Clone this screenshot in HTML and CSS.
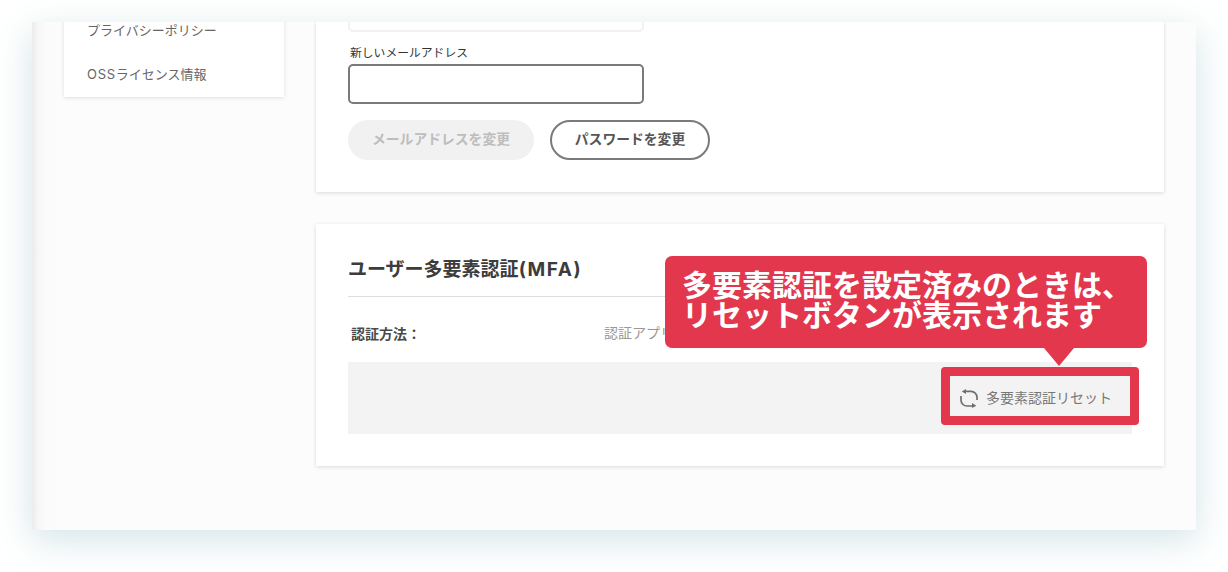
FILE: index.html
```html
<!DOCTYPE html>
<html lang="ja">
<head>
<meta charset="utf-8">
<title>ユーザー多要素認証</title>
<link rel="stylesheet" href="styles.css">
</head>
<body>
<div class="window">
  <div class="layout">
    <nav class="side">
      <a class="side-item">プライバシーポリシー</a>
      <a class="side-item"><span class="wide-sm">OSS</span>ライセンス情報</a>
    </nav>
    <main class="main">
      <section class="card card-mail">
        <div class="input input-old"></div>
        <label class="label">新しいメールアドレス</label>
        <div class="input"></div>
        <div class="btns">
          <button class="btn btn-off">メールアドレスを変更</button>
          <button class="btn btn-line">パスワードを変更</button>
        </div>
      </section>
      <section class="card card-mfa">
        <h2 class="title">ユーザー多要素認証<span class="wide-lg">(MFA)</span></h2>
        <div class="row">
          <span class="row-label">認証方法：</span>
          <span class="row-value">認証アプリ</span>
        </div>
        <div class="actions">
          <span class="reset">
            <svg class="reset-icon" viewBox="0 0 18 19" width="18" height="19" fill="none" stroke="#6f6f6f" stroke-width="1.7">
              <path d="M4 2.4H11A6 6 0 0 1 17 8.4V11"/>
              <path d="M1 7V11A6 6 0 0 0 7 17H14"/>
              <path d="M6 0 1.8 2.4 6 5Z" fill="#6f6f6f" stroke="none"/>
              <path d="M12 14 16.4 16.8 12 19Z" fill="#6f6f6f" stroke="none"/>
            </svg>
            <span class="reset-text">多要素認証リセット</span>
          </span>
        </div>
      </section>
    </main>
  </div>
  <div class="highlight"></div>
  <div class="callout">多要素認証を設定済みのときは、<br>リセットボタンが表示されます</div>
</div>
</body>
</html>
```

FILE: styles.css
```css
* { box-sizing: border-box; }
html, body { margin: 0; height: 100%; }
body {
  width: 1228px;
  height: 572px;
  padding: 22px 32px 42px;
  background: #fff;
  overflow: hidden;
  font-family: Inter, "Noto Sans CJK JP", "Noto Sans", sans-serif;
  color: #555;
}
.window {
  position: relative;
  width: 1164px;
  height: 508px;
  background: linear-gradient(90deg, #ececec 0, #f7f7f7 7px, #fbfbfb 14px, #fcfcfc 20px);
  box-shadow: 0 10px 34px rgba(120, 170, 185, 0.32);
  overflow: hidden;
}
.layout {
  display: flex;
  align-items: flex-start;
  gap: 32px;
  padding: 0 32px;
}
.side {
  width: 220px;
  margin-top: -14px;
  padding-bottom: 1px;
  background: #fff;
  box-shadow: 0 1px 4px rgba(0, 0, 0, 0.12);
}
.side-item {
  display: block;
  height: 44px;
  padding-left: 23px;
  font-size: 13px;
  line-height: 44px;
  color: #666;
}
.wide-sm { letter-spacing: 0.7px; }
.wide-lg { letter-spacing: 1.6px; }
.main { flex: 1; }
.card {
  display: flow-root;
  background: #fff;
  box-shadow: 0 1px 4px rgba(0, 0, 0, 0.14);
  padding: 0 32px;
}
.card-mail { height: 170px; }
.input {
  width: 296px;
  height: 40px;
  border: 2px solid #7a7a7a;
  border-radius: 5px;
  background: #fff;
}
.input-old {
  margin-top: -30px;
  border-color: #f2f2f2;
}
.label {
  display: block;
  margin-top: 12px;
  height: 20px;
  padding-left: 2px;
  font-size: 11.8px;
  line-height: 18px;
  color: #333;
}
.btns {
  display: flex;
  gap: 16px;
  margin-top: 16px;
}
.btn {
  height: 40px;
  border-radius: 20px;
  font-family: inherit;
  font-size: 13.8px;
  font-weight: 700;
  padding: 0 0 4px;
}
.btn-off {
  width: 186px;
  border: 0;
  background: #f1f1f1;
  color: #bdbdbd;
}
.btn-line {
  width: 160px;
  border: 2px solid #7a7a7a;
  background: #fff;
  color: #555;
}
.card-mfa {
  height: 242px;
  margin-top: 32px;
  padding-top: 31px;
}
.title {
  margin: 0;
  height: 42px;
  border-bottom: 1px solid #ddd;
  font-size: 19px;
  line-height: 30px;
  font-weight: 700;
  color: #3c3c3c;
}
.row {
  display: flex;
  height: 65px;
  padding: 27px 0 0 3px;
  font-size: 14px;
  line-height: 20px;
}
.row-label {
  width: 253px;
  font-weight: 700;
  color: #4a4a4a;
}
.row-value {
  font-size: 14px;
  line-height: 18px;
  color: #999;
}
.actions {
  display: flex;
  justify-content: flex-end;
  align-items: center;
  height: 72px;
  padding-right: 20px;
  background: #f3f3f3;
}
.reset {
  display: flex;
  align-items: center;
  gap: 8px;
  font-size: 14px;
  color: #777;
}
.reset-icon { flex: none; }
.reset-text { margin-top: -2px; }
.highlight {
  position: absolute;
  left: 909px;
  top: 345px;
  width: 198px;
  height: 58px;
  border: 9px solid #e2374d;
  border-radius: 4px;
}
.callout {
  position: absolute;
  left: 633px;
  top: 234px;
  width: 482px;
  height: 92px;
  padding: 14px 0 0 17px;
  background: #e2374d;
  border-radius: 7px;
  color: #fff;
  font-size: 30px;
  font-weight: 700;
  line-height: 30px;
}
.callout::after {
  content: "";
  position: absolute;
  left: 379px;
  top: 92px;
  border-style: solid;
  border-width: 18px 15px 0;
  border-color: #e2374d transparent transparent;
}
```
